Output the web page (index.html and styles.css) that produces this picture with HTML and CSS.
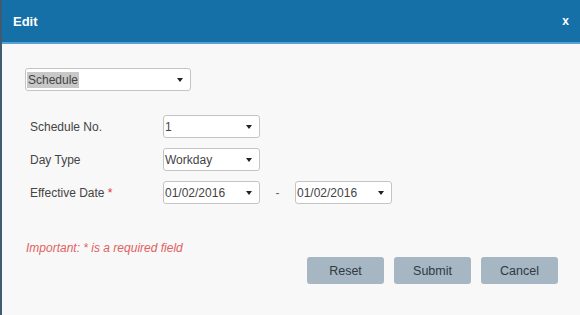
FILE: index.html
```html
<!DOCTYPE html>
<html lang="en">
<head>
  <meta charset="UTF-8">
  <meta name="viewport" content="width=device-width, initial-scale=1.0">
  <title>Edit</title>
  <link rel="stylesheet" href="styles.css">
</head>
<body>
  <div class="dialog">
    <div class="dialog-header">
      <span class="dialog-title">Edit</span>
      <span class="dialog-close">x</span>
    </div>
    <div class="dialog-body">
      <div class="select select-wide"><span class="selected">Schedule</span><span class="caret"></span></div>

      <div class="form">
        <div class="form-row">
          <label>Schedule No.</label>
          <div class="select"><span>1</span><span class="caret"></span></div>
        </div>
        <div class="form-row">
          <label>Day Type</label>
          <div class="select"><span>Workday</span><span class="caret"></span></div>
        </div>
        <div class="form-row">
          <label>Effective Date <span class="req">*</span></label>
          <div class="select"><span>01/02/2016</span><span class="caret"></span></div>
          <span class="dash">-</span>
          <div class="select"><span>01/02/2016</span><span class="caret"></span></div>
        </div>
      </div>

      <p class="note">Important: * is a required field</p>

      <div class="actions">
        <button type="button">Reset</button>
        <button type="button">Submit</button>
        <button type="button">Cancel</button>
      </div>
    </div>
  </div>
</body>
</html>
```

FILE: styles.css
```css
html, body {
  margin: 0;
  padding: 0;
  height: 100%;
}
body {
  font-family: "Liberation Sans", Arial, sans-serif;
  font-size: 12px;
  color: #444;
  background-color: #f8f8f8;
}
.dialog {
  height: 315px;
  border-left: 2px solid #3f5b70;
  box-sizing: border-box;
  background-color: #f8f8f8;
}
.dialog-header {
  height: 42px;
  background-color: #1570a8;
  border-bottom: 2px solid #5aa0d2;
  display: flex;
  align-items: center;
  justify-content: space-between;
  padding: 0 11px 0 11px;
  color: #fff;
  font-weight: bold;
}
.dialog-title {
  font-size: 13px;
}
.dialog-close {
  font-size: 12px;
}
.dialog-body {
  padding: 24px 22px 0 23px;
}
.select {
  width: 97px;
  height: 23px;
  box-sizing: border-box;
  background-color: #fff;
  border: 1px solid #c4c4c4;
  border-radius: 3px;
  display: flex;
  align-items: center;
  justify-content: space-between;
  padding: 0 7px 0 1px;
  color: #444;
}
.select-wide {
  width: 166px;
}
.selected {
  background-color: #c8c8c8;
  padding: 1px 1px;
}
.caret {
  width: 0;
  height: 0;
  border-left: 3.5px solid transparent;
  border-right: 3.5px solid transparent;
  border-top: 4px solid #222;
}
.form {
  margin-top: 24px;
  padding-left: 5px;
  display: flex;
  flex-direction: column;
  gap: 10px;
}
.form-row {
  display: flex;
  align-items: center;
}
.form-row label {
  width: 133px;
}
.req {
  color: #e0333a;
}
.dash {
  width: 35px;
  text-align: center;
  color: #666;
}
.note {
  margin: 37px 0 0 1px;
  color: #e06262;
  font-style: italic;
}
.actions {
  display: flex;
  justify-content: flex-end;
  gap: 10px;
  margin-top: 2px;
}
.actions button {
  width: 77px;
  height: 27px;
  border: none;
  border-radius: 3px;
  background-color: #a6b6c2;
  color: #2e3a44;
  font-family: "Liberation Sans", Arial, sans-serif;
  font-size: 12.5px;
  cursor: pointer;
}
.actions button:hover {
  background-color: #97a8b5;
}
```
